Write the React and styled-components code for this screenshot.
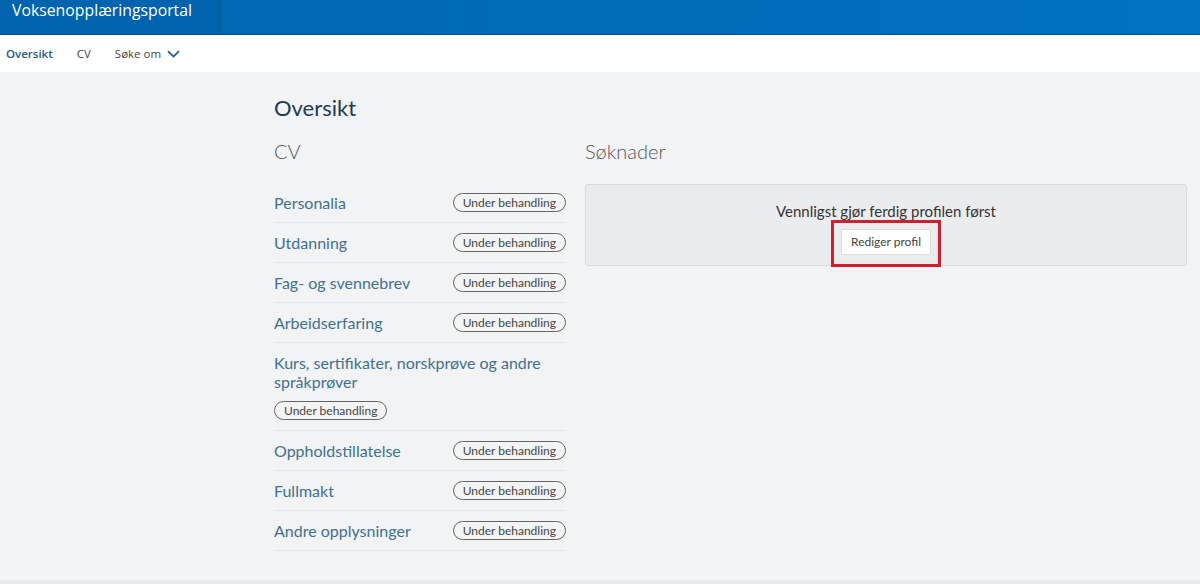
import React from 'react';
import styled, { createGlobalStyle } from 'styled-components';

const GlobalStyle = createGlobalStyle`
    html, body { margin: 0; padding: 0; }
    body {
        font-family: Lato, "Noto Sans", sans-serif;
        background: #f2f3f5;
        color: #333;
    }
`;

const cvItems = [
    'Personalia',
    'Utdanning',
    'Fag- og svennebrev',
    'Arbeidserfaring',
    'Kurs, sertifikater, norskprøve og andre språkprøver',
    'Oppholdstillatelse',
    'Fullmakt',
    'Andre opplysninger',
];

const Chevron = () => (
    <svg width="13" height="8" viewBox="0 0 13 8" fill="none">
        <path d="M1 1.2 L6.5 6.5 L12 1.2" stroke="#1d5a86" strokeWidth="1.7" />
    </svg>
);

const App = () => {
    return (
        <Page>
            <GlobalStyle />
            <Header>
                <Brand>Voksenopplæringsportal</Brand>
                <HeaderRest />
            </Header>
            <Nav>
                <NavLink active>Oversikt</NavLink>
                <NavLink>CV</NavLink>
                <NavLink>Søke om <Chevron /></NavLink>
            </Nav>
            <Main>
                <Content>
                    <Title>Oversikt</Title>
                    <Columns>
                        <CvColumn>
                            <SectionTitle>CV</SectionTitle>
                            <List>
                                {cvItems.map((item) => (
                                    <Row key={item} $wrap={item.length > 30}>
                                        <RowLabel>{item}</RowLabel>
                                        <Badge>Under behandling</Badge>
                                    </Row>
                                ))}
                            </List>
                        </CvColumn>
                        <AppColumn>
                            <SectionTitle>Søknader</SectionTitle>
                            <Notice>
                                <NoticeText>Vennligst gjør ferdig profilen først</NoticeText>
                                <Highlight>
                                    <Button>Rediger profil</Button>
                                </Highlight>
                            </Notice>
                        </AppColumn>
                    </Columns>
                </Content>
            </Main>
        </Page>
    );
}

export default App;

const Page = styled.div`
    min-height: 584px;
    display: flex;
    flex-direction: column;
`;

const Header = styled.header`
    height: 34px;
    display: flex;
    border-bottom: 1px solid #0b4f86;
`;

const Brand = styled.div`
    width: 208px;
    padding-left: 12px;
    background: #0063ad;
    color: #fff;
    font-family: "Open Sans", sans-serif;
    font-size: 15.8px;
    line-height: 21px;
    border-right: 1px solid #0a5a9c;
`;

const HeaderRest = styled.div`
    flex: 1;
    background: linear-gradient(90deg, #0068b4, #0072c2);
`;

const Nav = styled.nav`
    height: 37px;
    background: #fff;
    display: flex;
    align-items: center;
    gap: 24px;
    padding-left: 6px;
    font-family: "Open Sans", sans-serif;
`;

const NavLink = styled.a`
    font-size: 11.5px;
    color: ${p => p.active ? '#1d5a86' : '#444'};
    font-weight: ${p => p.active ? 600 : 400};
    display: flex;
    align-items: center;
    gap: 6px;
    cursor: pointer;
`;

const Main = styled.main`
    flex: 1;
    background: #f2f3f5;
    border-bottom: 4px solid #e9eaec;
`;

const Content = styled.div`
    margin-left: 274px;
    width: 913px;
    padding-top: 22px;
`;

const Title = styled.h1`
    margin: 0;
    font-size: 22px;
    font-weight: 400;
    color: #223a52;
    line-height: 28px;
`;

const Columns = styled.div`
    display: flex;
    gap: 19px;
    margin-top: 16px;
`;

const CvColumn = styled.section`
    width: 292px;
`;

const AppColumn = styled.section`
    flex: 1;
`;

const SectionTitle = styled.h2`
    margin: 0 0 20px;
    font-size: 20px;
    font-weight: 300;
    color: #555;
    line-height: 26px;
`;

const List = styled.div`
    display: flex;
    flex-direction: column;
    margin-top: -1px;
`;

const Row = styled.div`
    display: flex;
    flex-wrap: ${p => p.$wrap ? 'wrap' : 'nowrap'};
    align-items: center;
    justify-content: space-between;
    min-height: 40px;
    padding: ${p => p.$wrap ? '10px 0 10px' : '0'};
    gap: ${p => p.$wrap ? '10px 0' : '0'};
    border-bottom: 1px solid #e4e6e9;
    box-sizing: border-box;
`;

const RowLabel = styled.span`
    font-size: 16px;
    color: #42708c;
    line-height: 19px;
`;

const Badge = styled.span`
    font-size: 12px;
    color: #444;
    border: 1px solid #666;
    border-radius: 10px;
    padding: 1px 9px;
    line-height: 15px;
    background: #f4f4f4;
    white-space: nowrap;
`;

const Notice = styled.div`
    height: 82px;
    box-sizing: border-box;
    border: 1px solid #d9dadc;
    border-radius: 3px;
    background: #ebecee;
    display: flex;
    flex-direction: column;
    align-items: center;
    padding-top: 17px;
`;

const NoticeText = styled.div`
    font-size: 15px;
    color: #333;
    line-height: 18px;
`;

const Highlight = styled.div`
    border: 3px solid #d0202f;
    padding: 6px 7px 9px;
`;

const Button = styled.button`
    font-family: inherit;
    font-size: 12px;
    color: #444;
    background: #fff;
    border: 1px solid #ddd;
    border-radius: 2px;
    padding: 5px 9px;
    line-height: 14px;
`;
